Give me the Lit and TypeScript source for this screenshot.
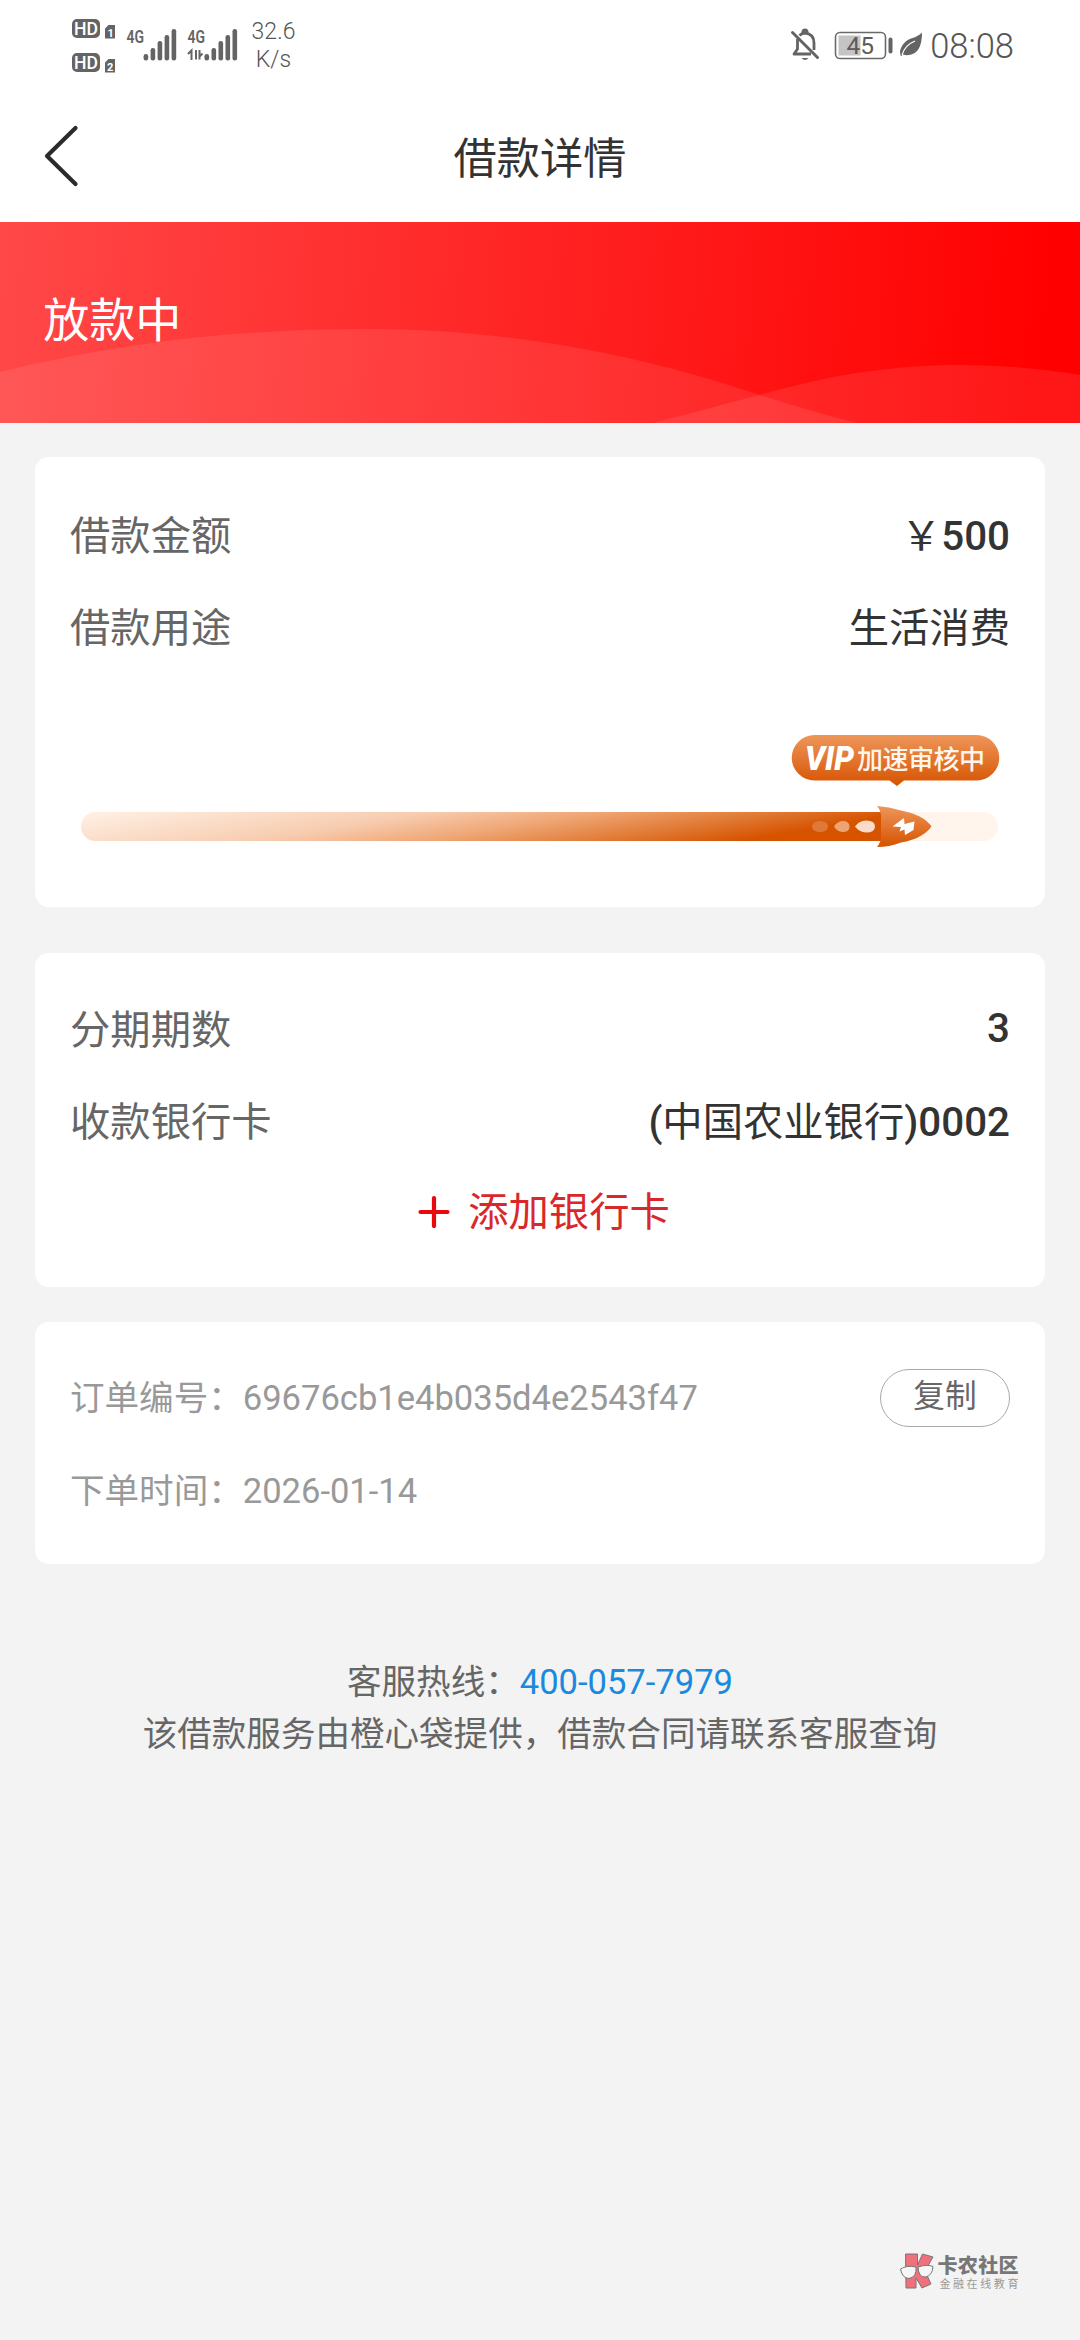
import { LitElement, html, css, svg } from "lit";
import { customElement, property } from "lit/decorators.js";

@customElement("status-bar")
class StatusBar extends LitElement {
  static styles = css`
    :host { display: flex; justify-content: space-between; height: 92px; font-family: Roboto, "Noto Sans CJK SC", sans-serif; color: #646464; }
    .left, .right { display: flex; }
    .left { padding-left: 70px; }
    .right { padding-right: 66px; }
    .speed { display: flex; flex-direction: column; align-items: center; width: 48px; margin-left: 9.5px; padding-top: 18px; font-size: 23px; line-height: 28px; font-weight: 300; color: #555; white-space: nowrap; }
    .clock { font-size: 34.5px; line-height: 40px; padding-top: 26px; font-weight: 300; color: #555; }
    svg { display: block; }
    .small { font: 600 18px Roboto, sans-serif; fill: #646464; }
    .hd { font: 500 18px Roboto, sans-serif; fill: #fff; }
    .sim { font: 700 11px Roboto, sans-serif; fill: #fff; }
    .bat { font: 400 24.5px Roboto, sans-serif; fill: #5c5c5c; }
  `;
  private bars(x: number) {
    return svg`
      <rect x=${x} y="54" width="4.6" height="6.5" rx="2.2"/>
      <rect x=${x + 7} y="48" width="4.6" height="12.5" rx="2.2"/>
      <rect x=${x + 14} y="41" width="4.6" height="19.5" rx="2.2"/>
      <rect x=${x + 21} y="35" width="4.6" height="25.5" rx="2.2"/>
      <rect x=${x + 28} y="29" width="4.6" height="31.5" rx="2.2"/>`;
  }
  render() {
    return html`
      <div class="left">
        <svg width="170" height="84" fill="#646464">
          <rect x="2" y="19" width="28" height="19" rx="5"/>
          <rect x="2" y="53" width="28" height="19" rx="5"/>
          <text class="hd" x="4" y="35" textLength="24" lengthAdjust="spacingAndGlyphs">HD</text>
          <text class="hd" x="4" y="69" textLength="24" lengthAdjust="spacingAndGlyphs">HD</text>
          <path d="M38.500 25h6.500v13.500h-10v-10z"/>
          <path d="M38.500 59h6.500v13.500h-10v-10z"/>
          <text class="sim" x="37.500" y="36.500">1</text>
          <text class="sim" x="37" y="70.500">2</text>
          <text class="small" x="56.500" y="43" textLength="17.500" lengthAdjust="spacingAndGlyphs">4G</text>
          <text class="small" x="117.500" y="43" textLength="17.500" lengthAdjust="spacingAndGlyphs">4G</text>
          ${this.bars(73.6)}
          ${this.bars(134.5)}
          <path d="M118 54l3.500-3.500V60M126 50v9.500M129.500 50v9.500M129.500 56.500l3-3" stroke="#646464" stroke-width="2" fill="none"/>
        </svg>
        <div class="speed"><span>32.6</span><span>K/s</span></div>
      </div>
      <div class="right">
        <svg width="142" height="84" viewBox="788 0 142 84">
          <path d="M792.500 32.500L817.500 57.500" stroke="#646464" stroke-width="3" stroke-linecap="round"/>
          <path d="M797.500 39v10l-3.500 5h17M799.500 35.500q2.500-2.500 5.500-2.500q9 1 9 10v7" fill="none" stroke="#646464" stroke-width="2.800" stroke-linejoin="round"/>
          <path d="M801.500 33.500v-1.500a3.500 3.500 0 0 1 7 0v1.500M801.500 58h7q-3.500 4-7 0" fill="#646464"/>
          <rect x="835.500" y="32.500" width="50" height="26" rx="4.500" fill="#fff" stroke="#6a6a6a" stroke-width="1.600"/>
          <rect x="838.500" y="35.500" width="22" height="20" fill="#c4c4c4"/>
          <rect x="888.500" y="37.500" width="4" height="16" rx="2" fill="#646464"/>
          <text class="bat" x="846.500" y="54.200">45</text>
          <path d="M922 32.500q0 21-13 22.500q-3.500.5-6-.5l-2 1.800q-2-4 0-8.300q3-7 10-9.500q7-2 11-6z" fill="#646464"/>
          <path d="M902 55q3-10 13-14" fill="none" stroke="#fff" stroke-width="1.300"/>
        </svg>
        <div class="clock">08:08</div>
      </div>`;
  }
}

@customElement("info-row")
class InfoRow extends LitElement {
  @property() label = "";
  static styles = css`
    :host { display: flex; justify-content: space-between; align-items: center; height: 92px; font-size: 40.32px; line-height: 60px; color: #333; white-space: nowrap; }
    .label { color: #666; }
    .value { font-weight: 500; display: flex; }
  `;
  render() {
    return html`<span class="label">${this.label}</span><span class="value"><slot></slot></span>`;
  }
}

@customElement("review-progress")
class ReviewProgress extends LitElement {
  static styles = css`
    :host { display: block; margin: 45px 0 0 0; }
    svg { display: block; }
    .vip { font: italic 900 33px Roboto, sans-serif; fill: #fff; }
    .tip { font: 500 26px "Noto Sans CJK SC", sans-serif; fill: #fff7ee; }
  `;
  render() {
    return html`
      <svg width="940" height="140" viewBox="70 720 940 140">
        <defs>
          <linearGradient id="bub" x1="0" y1="0" x2="0" y2="1"><stop offset="0" stop-color="#ee965a"/><stop offset="1" stop-color="#d65300"/></linearGradient>
          <linearGradient id="bar" gradientUnits="userSpaceOnUse" x1="81" y1="812" x2="103.500" y2="947">
            <stop offset="0" stop-color="#fff1e6"/><stop offset=".42" stop-color="#f7ccaf"/><stop offset=".63" stop-color="#efa573"/><stop offset=".85" stop-color="#df762f"/><stop offset="1" stop-color="#d65300"/>
          </linearGradient>
        </defs>
        <rect x="81" y="812" width="917" height="29" rx="14.500" fill="#fff5ec"/>
        <path d="M95.500 812H884v29H95.500a14.500 14.500 0 0 1 0-29z" fill="url(#bar)"/>
        <ellipse cx="820" cy="826.500" rx="8" ry="5.500" fill="#e0783a"/>
        <path d="M834 826.500q3-5 8.500-5.500q7 0 7 5.500t-7 5.500q-5.500-.5-8.500-5.500z" fill="#efa372"/>
        <path d="M855 826.500q4-5.500 11-6q9 0 9 6t-9 6q-7-.5-11-6z" fill="#fbdcc8"/>
        <path d="M877 806q12 .5 24 4.500q22 4 30.500 16q-8.500 12-30.500 16q-12 4.500-24 4.500q4-5 4-10v-21q0-5-4-10z" fill="url(#bub)"/>
        <path d="M892.500 826.500l11.500-8.500l.5 6l10-2.500l-1 8.500l-8.500 5l-.5-5.500l-5 2l1.500-4.500z" fill="#fff"/>
        <path d="M814.500 735h162a22.500 22.500 0 0 1 0 45.500H904l-7 5.500-7.500-5.500h-75a22.500 22.500 0 0 1 0-45.500z" fill="url(#bub)"/>
        <text class="vip" x="805" y="769.500" textLength="49" lengthAdjust="spacingAndGlyphs">VIP</text>
        <text class="tip" x="857" y="768.500" textLength="128">加速审核中</text>
      </svg>`;
  }
}

@customElement("app-root")
class AppRoot extends LitElement {
  static styles = css`
    :host { display: block; }
    .page { display: flex; flex-direction: column; width: 1080px; height: 2340px; background: #f3f3f3; font-family: Roboto, "Noto Sans CJK SC", sans-serif; overflow: hidden; }
    .head { background: #fff; height: 222px; flex: none; }
    .nav { display: grid; grid-template-columns: 120px 1fr 120px; height: 130px; align-items: center; }
    .title { text-align: center; font-size: 43.2px; line-height: 64px; color: #333; padding-top: 6px; }
    .back { display: block; margin: -3px 0 0 40px; }
    .banner { display: grid; height: 201px; flex: none; }
    .banner > * { grid-area: 1 / 1; }
    .state { color: #fff; font-size: 46.08px; line-height: 66px; padding: 66px 0 0 43.200px; }
    .card { background: #fff; border-radius: 14px; margin: 0 35px; padding: 0 35px; box-sizing: border-box; flex: none; color: #333; }
    .amount { height: 450px; margin-top: 34px; padding-top: 34px; }
    .plan { height: 334px; margin-top: 46px; padding-top: 32px; }
    .order { height: 242px; margin-top: 35px; padding-top: 29px; font-size: 34.56px; color: #999; }
    .regular { font-weight: 400; }
    .solo { padding-bottom: 4px; }
    .add { display: flex; align-items: center; justify-content: center; gap: 18px; height: 84px; color: #d9282a; font-size: 40.32px; line-height: 60px; margin-left: 8px; }
    .add span { padding-top: 3px; }
    .line { display: flex; justify-content: space-between; align-items: center; height: 93px; }
    .line > span { padding-bottom: 6px; }
    .copy { box-sizing: border-box; width: 130px; height: 58px; border: 1px solid #aaa; border-radius: 29px; font: 400 31.68px/54px Roboto, "Noto Sans CJK SC", sans-serif; color: #666; background: #fff; padding: 0 0 2px; text-align: center; }
    .help { text-align: center; color: #666; font-size: 34.56px; line-height: 51.84px; margin-top: 93px; }
    .phone { color: #1b89dd; }
    .mark { display: flex; gap: 3px; margin: auto 59px 50px auto; align-items: center; }
    .brand { display: flex; flex-direction: column; font-family: "Noto Sans CJK SC", sans-serif; white-space: nowrap; }
    .name { font-size: 20px; line-height: 23px; font-weight: 900; color: #777; letter-spacing: .4px; }
    .sub { font-size: 11px; line-height: 14px; color: #999; letter-spacing: 2.6px; padding-left: 2px; }
  `;
  render() {
    return html`
      <div class="page">
        <header class="head">
          <status-bar></status-bar>
          <div class="nav">
            <svg class="back" width="42" height="66" fill="none" stroke="#2b2b2b" stroke-width="4.200" stroke-linecap="round" stroke-linejoin="round"><path d="M35.500 5L7 33L35.500 61"/></svg>
            <div class="title">借款详情</div>
          </div>
        </header>
        <section class="banner">
          <svg width="1080" height="201" viewBox="0 222 1080 201">
            <defs><linearGradient id="red" gradientUnits="userSpaceOnUse" x1="0" y1="250" x2="1050" y2="330"><stop offset="0" stop-color="#ff4848"/><stop offset=".5" stop-color="#ff2424"/><stop offset="1" stop-color="#ff0000"/></linearGradient></defs>
            <rect y="222" width="1080" height="201" fill="url(#red)"/>
            <path d="M0 372C130 340 250 329 365 329C520 329 650 358 760 395Q810 411 857 423H0z" fill="#fff" fill-opacity=".09"/>
            <path d="M654 423C700 411 720 405 760 395C830 375 890 365 964 365Q1030 366 1080 375V423z" fill="#fff" fill-opacity=".09"/>
          </svg>
          <div class="state">放款中</div>
        </section>
        <section class="card amount">
          <info-row label="借款金额"><span class="regular">￥</span>500</info-row>
          <info-row label="借款用途"><span class="regular">生活消费</span></info-row>
          <review-progress></review-progress>
        </section>
        <section class="card plan">
          <info-row label="分期期数"><span class="solo">3</span></info-row>
          <info-row label="收款银行卡">(<span class="regular">中国农业银行</span>)0002</info-row>
          <div class="add">
            <svg width="32" height="34" stroke="#e8090d" stroke-width="4.200" stroke-linecap="round"><path d="M2.500 18h27M16 4v28"/></svg>
            <span>添加银行卡</span>
          </div>
        </section>
        <section class="card order">
          <div class="line"><span>订单编号：69676cb1e4b035d4e2543f47</span><button class="copy">复制</button></div>
          <div class="line"><span>下单时间：2026-01-14</span></div>
        </section>
        <footer class="help">
          <div>客服热线：<span class="phone">400-057-7979</span></div>
          <div>该借款服务由橙心袋提供，借款合同请联系客服查询</div>
        </footer>
        <div class="mark">
          <svg width="34" height="38" viewBox="900 2252 34 38" stroke="#777" stroke-width="1">
            <path d="M905.500 2254h12v11l5-11 10.500 3-8 14 6 13-9 4-6-10v10h-10z" fill="#f0707c"/>
            <path d="M900.500 2269q6-4 15.500-2q1 10-7 11.500q-7-.5-8.500-9.500zM918 2267q9-3 15-.5q-.5 9-7.500 10.500q-7 .5-7.500-10z" fill="#f6f6f6"/>
          </svg>
          <div class="brand"><span class="name">卡农社区</span><span class="sub">金融在线教育</span></div>
        </div>
      </div>`;
  }
}
